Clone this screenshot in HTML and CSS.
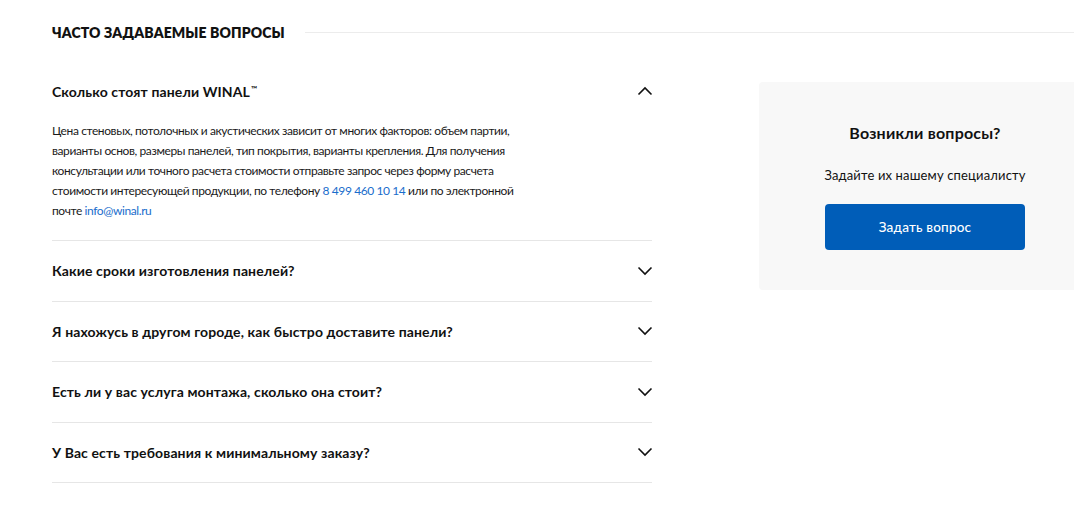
FILE: index.html
```html
<!DOCTYPE html>
<html lang="ru">
<head>
<meta charset="utf-8">
<link rel="stylesheet" href="styles.css">
</head>
<body>
<div class="page">
  <div class="head">
    <h2 class="head-title">ЧАСТО ЗАДАВАЕМЫЕ ВОПРОСЫ</h2>
    <div class="head-line"></div>
  </div>
  <div class="content">
    <div class="faq">
      <div class="item open">
        <div class="q">
          <span>Сколько стоят панели WINAL<sup class="tm">™</sup></span>
          <svg class="chev" width="16" height="10" viewBox="0 0 16 10"><path d="M1.5 8.5 L8 2 L14.5 8.5" fill="none" stroke="#111" stroke-width="1.6"/></svg>
        </div>
        <div class="a">Цена стеновых, потолочных и акустических зависит от многих факторов: объем партии, варианты основ, размеры панелей, тип покрытия, варианты крепления. Для получения консультации или точного расчета стоимости отправьте запрос через форму расчета стоимости интересующей продукции, по телефону <a class="link" href="#">8 499 460 10 14</a> или по электронной почте <a class="link" href="#">info@winal.ru</a></div>
      </div>
      <div class="item">
        <div class="q">
          <span>Какие сроки изготовления панелей?</span>
          <svg class="chev" width="16" height="10" viewBox="0 0 16 10"><path d="M1.5 1.5 L8 8 L14.5 1.5" fill="none" stroke="#111" stroke-width="1.6"/></svg>
        </div>
      </div>
      <div class="item">
        <div class="q">
          <span>Я нахожусь в другом городе, как быстро доставите панели?</span>
          <svg class="chev" width="16" height="10" viewBox="0 0 16 10"><path d="M1.5 1.5 L8 8 L14.5 1.5" fill="none" stroke="#111" stroke-width="1.6"/></svg>
        </div>
      </div>
      <div class="item">
        <div class="q">
          <span>Есть ли у вас услуга монтажа, сколько она стоит?</span>
          <svg class="chev" width="16" height="10" viewBox="0 0 16 10"><path d="M1.5 1.5 L8 8 L14.5 1.5" fill="none" stroke="#111" stroke-width="1.6"/></svg>
        </div>
      </div>
      <div class="item">
        <div class="q">
          <span>У Вас есть требования к минимальному заказу?</span>
          <svg class="chev" width="16" height="10" viewBox="0 0 16 10"><path d="M1.5 1.5 L8 8 L14.5 1.5" fill="none" stroke="#111" stroke-width="1.6"/></svg>
        </div>
      </div>
    </div>
    <div class="card">
      <div class="card-title">Возникли вопросы?</div>
      <div class="card-sub">Задайте их нашему специалисту</div>
      <button class="btn">Задать вопрос</button>
    </div>
  </div>
</div>
</body>
</html>
```
FILE: styles.css
```css
html, body {
  margin: 0;
  padding: 0;
  background: #fff;
  overflow: hidden;
}
body {
  font-family: "Lato", "Noto Sans", sans-serif;
  color: #111;
}
.page {
  padding-left: 52px;
  width: 1100px;
}
.head {
  display: flex;
  align-items: center;
  height: 58px;
  padding-top: 3px;
  gap: 20px;
}
.head-title {
  margin: 0;
  font-size: 14px;
  font-weight: 800;
  letter-spacing: 0.1px;
  white-space: nowrap;
}
.head-line {
  flex: 1;
  height: 1px;
  background: #ececec;
}
.content {
  display: flex;
  align-items: flex-start;
  gap: 107px;
}
.faq {
  width: 600px;
}
.item {
  border-bottom: 1px solid #e6e6e6;
}
.q {
  height: 60px;
  display: flex;
  align-items: center;
  justify-content: space-between;
  font-size: 14px;
  font-weight: 700;
  letter-spacing: 0.12px;
}
.item + .item .q {
  height: 59.5px;
}
.tm {
  font-size: 8px;
  line-height: 0;
  vertical-align: 5px;
  margin-left: 1px;
}
.chev {
  margin-right: -1px;
}
.a {
  max-width: 475px;
  font-size: 12px;
  letter-spacing: -0.4px;
  line-height: 20px;
  padding-bottom: 19px;
  color: #1a1a1a;
}
.link {
  color: #1a6dcc;
  text-decoration: none;
}
.card {
  margin-top: 21px;
  width: 332px;
  height: 208px;
  box-sizing: border-box;
  background: #f8f8f8;
  border-radius: 4px;
  display: flex;
  flex-direction: column;
  align-items: center;
  padding-top: 41px;
}
.card-title {
  font-size: 16px;
  font-weight: 700;
  line-height: 20px;
  letter-spacing: 0.2px;
}
.card-sub {
  margin-top: 22px;
  font-size: 13px;
  line-height: 20px;
  letter-spacing: 0.15px;
}
.btn {
  margin-top: 19px;
  width: 200px;
  height: 46px;
  border: 0;
  border-radius: 4px;
  background: #005db8;
  color: #fff;
  font-family: inherit;
  font-size: 13.5px;
  font-weight: 500;
  letter-spacing: 0.2px;
  cursor: pointer;
}
```
